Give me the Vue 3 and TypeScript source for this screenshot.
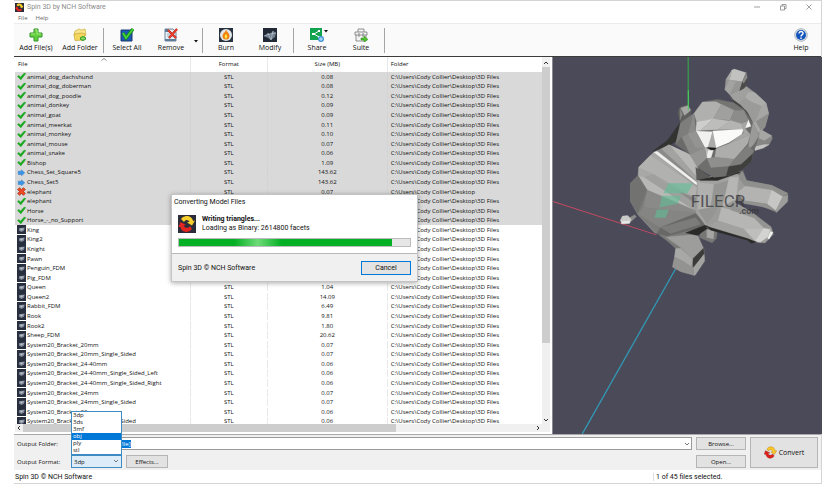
<script setup lang="ts">
import { onMounted, ref } from 'vue'

type Status = 'done' | 'next' | 'error' | 'idle'
interface Model { name: string; status: Status; size: string; format: string; folder: string }

const root = 'C:\\Users\\Cody Collier\\Desktop'
const models: Model[] = ([
  ['animal_dog_dachshund', 'done', '0.08'],
  ['animal_dog_doberman', 'done', '0.08'],
  ['animal_dog_poodle', 'done', '0.12'],
  ['animal_donkey', 'done', '0.09'],
  ['animal_goat', 'done', '0.09'],
  ['animal_meerkat', 'done', '0.11'],
  ['animal_monkey', 'done', '0.10'],
  ['animal_mouse', 'done', '0.07'],
  ['animal_snake', 'done', '0.06'],
  ['Bishop', 'done', '1.09'],
  ['Chess_Set_Square5', 'next', '143.62'],
  ['Chess_Set5', 'next', '143.62'],
  ['elephant', 'error', '0.07'],
  ['elephant', 'done', ''],
  ['Horse', 'done', ''],
  ['Horse_-_no_Support', 'done', ''],
  ['King', 'idle', ''],
  ['King2', 'idle', ''],
  ['Knight', 'idle', ''],
  ['Pawn', 'idle', ''],
  ['Penguin_FDM', 'idle', ''],
  ['Pig_FDM', 'idle', ''],
  ['Queen', 'idle', '1.04'],
  ['Queen2', 'idle', '14.09'],
  ['Rabbit_FDM', 'idle', '6.49'],
  ['Rook', 'idle', '9.81'],
  ['Rook2', 'idle', '1.80'],
  ['Sheep_FDM', 'idle', '20.62'],
  ['System20_Bracket_20mm', 'idle', '0.07'],
  ['System20_Bracket_20mm_Single_Sided', 'idle', '0.07'],
  ['System20_Bracket_24-40mm', 'idle', '0.06'],
  ['System20_Bracket_24-40mm_Single_Sided_Left', 'idle', '0.06'],
  ['System20_Bracket_24-40mm_Single_Sided_Right', 'idle', '0.06'],
  ['System20_Bracket_24mm', 'idle', '0.07'],
  ['System20_Bracket_24mm_Single_Sided', 'idle', '0.07'],
  ['System20_Bracket_32', 'idle', '0.06'],
  ['System20_Bracket_32mm_Single_Sided', 'idle', '0.06'],
] as [string, Status, string][]).map(([name, status, size]) => ({
  name, status, size, format: size ? 'STL' : '', folder: status === 'error' ? root : root + '\\3D Files',
}))

const formats = ['3dp', '3ds', '3mf', 'obj', 'ply', 'stl']
const format = ref('3dp')
const hovered = ref('obj')
const folder = ref('[Same as source file]')
const progress = 92
const folderInput = ref<HTMLInputElement | null>(null)
onMounted(() => {
  folderInput.value?.focus()
  folderInput.value?.select()
})

// Facets of the low-poly model: fill followed by its outline points.
const facets: [string, string][] = [
  // tail
  ['#8b8b89', '85,472 103,462 108,468 92,482'],
  ['#c9c9c7', '60,478 66,466 82,464 93,476 88,487 64,489'],
  ['#e9e9e7', '64,482 88,480 88,487 64,489'],
  // far legs
  ['#777775', '300,510 330,500 350,508 347,532 334,546 296,530'],
  ['#a5a5a3', '318,506 340,510 338,534 318,530'],
  ['#7a7a78', '412,335 426,330 437,360 512,374 560,398 561,422 526,455 482,436 430,426 395,418 388,375'],
  ['#8f8f8d', '424,333 437,360 512,374 560,398 545,408 512,388 432,376 412,350'],
  ['#b3b3b1', '432,376 512,388 498,430 430,420 408,395'],
  ['#9c9c9a', '412,350 432,376 408,395 392,380'],
  ['#c6c6c4', '512,388 545,408 524,450 498,430'],
  ['#9d9d9b', '545,408 560,404 558,424 526,455 524,450'],
  ['#929290', '430,420 498,430 524,450 482,438 428,428'],
  // hind leg
  ['#7a7a78', '175,522 200,540 225,563 218,610 284,626 312,592 310,565 285,518 300,500'],
  ['#9d9d9b', '196,528 290,520 308,562 276,594 240,560'],
  ['#3b3b39', '308,562 310,578 278,620 276,594'],
  ['#a8a8a6', '225,563 240,562 276,594 272,620 250,602 222,588'],
  ['#939391', '215,618 222,588 250,602 278,620 280,643 240,632'],
  ['#a3a3a1', '278,620 310,580 312,600 284,642 280,643'],
  // body
  ['#333331', '155,274 200,240 240,185 245,228 206,256'],
  ['#8a8a88', '160,275 205,253 270,283 292,322 292,352 300,420 320,496 200,527 162,516 112,462 90,422 90,368 113,345 115,320'],
  ['#a8a8a6', '160,275 115,320 113,345 132,350 280,410 290,380'],
  ['#b8b8b6', '113,345 132,350 285,450 140,388'],
  ['#a0a09e', '132,350 160,340 285,430 285,450'],
  ['#b1b1af', '115,320 150,284 288,380 286,410 160,340'],
  ['#b8b8b6', '205,253 270,283 292,322 290,352'],
  ['#a3a3a1', '183,266 205,253 290,352 288,362'],
  ['#f0f0ee', '160,275 170,272 289,366 288,374'],
  ['#727270', '113,345 90,368 90,422 112,460 128,432 140,388'],
  ['#8a8a88', '140,388 285,450 128,440'],
  ['#7c7c7a', '140,388 128,440 285,458 170,518 112,460'],
  ['#858583', '128,440 285,458 180,500 112,460'],
  ['#686866', '170,518 180,500 285,458 320,496 270,508 200,526'],
  ['#7c7c7a', '180,500 285,470 300,490 210,518'],
  ['#2a2a28', '255,516 316,492 324,500 290,524'],
  // chest
  ['#a2a2a0', '290,350 330,348 400,335 415,345 412,400 395,440 342,492 315,495 286,455'],
  ['#b0b0ae', '292,365 340,372 330,440 292,448'],
  ['#959593', '340,372 385,360 365,430 320,490 292,448 330,440'],
  ['#b6b6b4', '385,350 412,350 405,415 365,440'],
  ['#2b2b29', '288,355 330,350 400,328 418,336 350,360 300,360'],
  ['#5b5b59', '285,320 330,350 288,358'],
  // near front leg
  ['#9b9b99', '372,435 395,420 455,456 510,498 517,520 492,546 470,545 318,500 350,442'],
  ['#b6b6b4', '362,440 460,466 488,502 430,505 352,480'],
  ['#939391', '388,430 450,455 512,503 488,500 460,472 390,448'],
  ['#a1a19f', '318,498 352,480 430,505 462,538 440,535'],
  ['#bebebc', '430,505 488,502 462,540'],
  ['#d3d3d1', '488,502 508,506 500,528 478,544 462,540'],
  ['#f3f3f1', '508,512 516,514 504,535 500,532'],
  ['#2a2a28', '314,494 330,500 440,533 466,543 450,547 440,538 330,508'],
  // trunk
  ['#9a9a98', '385,102 424,90 436,78 462,98 495,128 503,160 492,200 478,217 450,212 455,185 437,150 408,130 392,115'],
  ['#a0a09e', '388,102 432,82 444,94 420,128 400,124'],
  ['#adadab', '444,94 462,98 495,128 482,138 448,124 432,112'],
  ['#9b9b99', '432,112 448,124 482,138 462,182 436,150 416,128'],
  ['#a6a6a4', '482,138 495,128 503,160 464,184'],
  ['#8d8d8b', '464,184 503,160 492,200 480,212'],
  ['#a9a9a7', '455,186 464,184 480,212 472,220 452,212'],
  ['#40403e', '386,104 396,118 420,136 440,160 452,186 442,174 424,150 402,130'],
  ['#969694', '375,58 386,60 425,64 416,90 386,102 372,88'],
  ['#a9a9a7', '375,58 393,30 386,60'],
  ['#c1c1bf', '393,30 400,27 436,38 425,64 386,60'],
  ['#a3a3a1', '386,60 404,66 386,102 372,88'],
  ['#4b4b49', '436,38 439,60 430,84 416,92 425,64'],
  ['#8a8a88', '436,38 439,52 428,70 425,64'],
  // ears
  ['#5e5e5c', '238,140 262,134 273,150 268,166 238,182 232,155'],
  ['#a6a6a4', '240,143 262,136 270,150 252,166'],
  ['#858583', '238,145 246,162 238,180'],
  ['#858583', '480,208 512,226 514,234 504,254 486,264 462,270 452,255 470,228'],
  ['#a6a6a4', '480,208 512,226 490,240 470,232'],
  ['#c4c4c2', '458,260 490,252 504,252 486,263 462,270'],
  // head
  ['#6b6b69', '305,125 350,117 398,127 430,148 455,186 474,225 458,275 450,305 420,330 385,345 340,350 300,328 268,282 225,252 240,182 278,160'],
  ['#b0b0ae', '305,125 345,124 362,132 338,175 288,184 280,160'],
  ['#757573', '345,120 398,128 428,150 400,150 362,132'],
  ['#a0a09e', '362,132 400,150 388,180 338,175'],
  ['#8c8c8a', '400,150 428,150 442,178 422,190 388,180'],
  ['#cececc', '288,184 338,175 300,210 285,212'],
  ['#bdbdbb', '338,175 388,182 350,208 300,210'],
  ['#b4b4b2', '388,180 422,190 428,206 350,208'],
  ['#f1f1ef', '285,212 335,214 325,258 312,262'],
  ['#ababa9', '336,214 322,258 345,262'],
  ['#fafaf8', '336,212 428,206 422,222 384,246 346,262'],
  ['#f4f4f2', '442,178 450,198 432,204'],
  ['#a6a6a4', '422,190 440,182 432,204 448,222 384,250 428,218'],
  ['#8b8b89', '280,160 285,212 312,262 268,282 242,226 240,190'],
  ['#7d7d7b', '240,190 278,162 262,220 240,232 225,252'],
  ['#949492', '262,220 285,212 312,262 285,262'],
  ['#adadab', '346,264 384,250 448,222 440,250 400,296 342,290'],
  ['#9a9a98', '448,222 456,186 474,225 458,252 440,270'],
  ['#b9b9b7', '312,262 328,268 318,294'],
  ['#eeeeec', '322,270 338,268 330,294 318,292'],
  ['#959593', '268,282 312,262 318,294 290,320'],
  ['#8f8f8d', '318,294 342,290 400,296 384,318 330,322'],
  ['#6e6e6c', '290,320 318,294 330,322 382,318 376,346 340,350'],
  ['#7e7e7c', '400,296 440,255 458,272 420,315 384,318'],
  ['#3f3f3d', '384,318 420,312 456,280 450,305 420,330 385,345 376,346'],
  ['#1b1b1a', '320,262 346,263 342,268 332,269'],
]
</script>

<template>
  <main class="app">
    <header class="titlebar">
      <svg class="logo" viewBox="0 0 18 18"><use href="#spin" /></svg>
      <h1>Spin 3D by NCH Software</h1>
      <div class="window-buttons">
        <button aria-label="Minimize"><svg viewBox="0 0 8 8"><path d="M1 4h6" /></svg></button>
        <button aria-label="Restore"><svg viewBox="0 0 8 8"><path d="M1.500 3h4v4h-4zM3 3V1.500h4v4H5.500" /></svg></button>
        <button aria-label="Close"><svg viewBox="0 0 8 8"><path d="M1.500 1.500l5 5M6.500 1.500l-5 5" /></svg></button>
      </div>
    </header>

    <nav class="menubar"><button>File</button><button>Help</button></nav>

    <div class="toolbar">
      <button class="tool">
        <svg viewBox="0 0 14 14"><path d="M5 1h4v4h4v4H9v4H5V9H1V5h4z" fill="#62cf3c" stroke="#36962a" /><path d="M6 2h2v4h4M2 6h4" stroke="#a5ec7d" fill="none" /></svg>
        Add File(s)
      </button>
      <button class="tool">
        <svg viewBox="0 0 14 14"><path d="M2 3l4-2 2 1 4-1 1 6-9 5-3-5z" fill="#f7e58a" stroke="#cdb042" stroke-width=".7" /><path d="M1 6l8-1 3 1-1 6-9 .5z" fill="#f3d75d" stroke="#c7a63a" stroke-width=".7" /><path d="M10 8v5M7 10.500h6" stroke="#2c9a2c" stroke-width="2.600" /><path d="M10 8.500v4M8 10.500h4" stroke="#8be05c" stroke-width="1.200" /></svg>
        Add Folder
      </button>
      <i class="sep"></i>
      <button class="tool">
        <svg viewBox="0 0 14 14"><path d="M1 2h11v11H1z" fill="#1c58b8" stroke="#16386f" /><path d="M3 5l3 5 7-9" fill="none" stroke="#167d1d" stroke-width="3.400" /><path d="M3 5l3 5 7-9" fill="none" stroke="#3fd23a" stroke-width="2" /></svg>
        Select All
      </button>
      <button class="tool">
        <svg viewBox="0 0 14 14"><path d="M1 1h8l3 3v9H1z" fill="#e6eff5" stroke="#71869a" /><path d="M1 1h3v3H1zM1 11h11v2H1z" fill="#5d7d9b" /><path d="M3 8h6M3 6h3" stroke="#9db3c5" /><path d="M4 2l8 8M13 1L5 10" stroke="#a3160c" stroke-width="2.200" /><path d="M4 2l8 8M13 1L5 10" stroke="#ee4230" stroke-width="1.500" /></svg>
        Remove
      </button>
      <button class="more" aria-label="More remove options"><svg viewBox="0 0 6 6"><path d="M1 2h4L3 4.500z" fill="#111" /></svg></button>
      <i class="sep"></i>
      <button class="tool">
        <svg viewBox="0 0 14 14"><path d="M0 0h14v14H0z" fill="#29323f" /><circle cx="7" cy="7" r="6" fill="#e2e6ea" /><path d="M7 1.500c.5 2 3.500 3.500 3.500 6.500a3.500 3.500 0 0 1-7 0c0-1.500 1-2 1.300-3.500C6 5 6.500 3 7 1.500z" fill="#f0830e" /><path d="M7 6c1.500 1.500 1.800 4 0 4.500C5 10 5.500 7.500 7 6z" fill="#ffe14a" /></svg>
        Burn
      </button>
      <button class="tool">
        <svg viewBox="0 0 14 14"><use href="#mesh" /></svg>
        Modify
      </button>
      <i class="sep"></i>
      <button class="tool share">
        <svg viewBox="0 0 14 14"><path d="M0 0h12v12H0z" fill="#12a350" /><path d="M9 3L4 6l5 3" fill="none" stroke="#fff" /><path d="M8 2h2v2H8zM2 5h3v2H2zM8 8h2v2H8z" fill="#fff" /><circle cx="11" cy="11" r="3" fill="#3c93d8" /><path d="M11 9v4M9 11h4" stroke="#c5e5fa" /></svg>
        <svg class="caret" viewBox="0 0 6 6"><path d="M1 2h4L3 4.500z" fill="#111" /></svg>
        Share
      </button>
      <button class="tool">
        <svg viewBox="0 0 14 14"><path d="M4 4V1h6v3M1 4h12v3H1zM2 7v6h10V7M5 5v4M9 5v4" fill="#f4f4f4" stroke="#777" stroke-width=".8" /><path d="M7 10h3V8l4 3.500-4 2.500v-2H7z" fill="#4fc22e" stroke="#2d8a1b" stroke-width=".5" /></svg>
        Suite
      </button>
      <i class="sep"></i>
      <button class="tool help">
        <svg viewBox="0 0 14 14"><circle cx="7" cy="7" r="6.300" fill="#dfe3e8" stroke="#9aa4b0" stroke-width=".8" /><circle cx="7" cy="7" r="5" fill="#1355bb" /><path d="M5 5.500C5 2.800 9.200 3 9 5.400 9 7 7 6.800 7 8.500M7 9.500V11" fill="none" stroke="#fff" stroke-width="1.400" /></svg>
        Help
      </button>
    </div>

    <div class="content">
      <section class="files">
        <div class="list">
          <table>
            <thead>
              <tr><th>File</th><th>Format</th><th>Size (MB)</th><th>Folder</th></tr>
            </thead>
            <tbody>
              <tr v-for="(m, i) in models" :key="i" :class="{ selected: m.status !== 'idle' }">
                <td><svg class="status" viewBox="0 0 14 14"><use :href="'#' + m.status" /></svg>{{ m.name }}</td>
                <td>{{ m.format }}</td>
                <td>{{ m.size }}</td>
                <td>{{ m.folder }}</td>
              </tr>
            </tbody>
          </table>
          <svg class="sort" viewBox="0 0 6 3"><path d="M.5 2.500L3 .5l2.500 2" fill="none" stroke="#777" stroke-width=".8" /></svg>
        </div>
        <div class="vscroll">
          <svg viewBox="0 0 8 8"><path d="M2 5l2-2 2 2" /></svg>
          <div class="track"><div class="thumb"></div></div>
          <svg viewBox="0 0 8 8"><path d="M2 3l2 2 2-2" /></svg>
        </div>
        <div class="hscroll">
          <svg viewBox="0 0 8 8"><path d="M5 2L3 4l2 2" /></svg>
          <div class="track"><div class="thumb"></div></div>
          <svg viewBox="0 0 8 8"><path d="M3 2l2 2-2 2" /></svg>
        </div>

        <div class="dialog" role="dialog" aria-labelledby="dialog-title">
          <h2 id="dialog-title">Converting Model Files</h2>
          <div class="job">
            <svg viewBox="0 0 18 18"><use href="#spin" /></svg>
            <p><strong>Writing triangles...</strong><br />Loading as Binary: 2614800 facets</p>
          </div>
          <div class="bar"><div class="fill" :style="{ width: progress + '%' }"></div></div>
          <footer><span>Spin 3D © NCH Software</span><button>Cancel</button></footer>
        </div>
      </section>

      <section class="viewer">
        <svg viewBox="553 57 268 376" preserveAspectRatio="xMinYMin slice">
          <path d="M687.500 57V110" stroke="#35b04a" />
          <path d="M550 199.800L656 234" stroke="#c94a60" />
          <path d="M676 266L581 434" stroke="#3199b5" stroke-width="1.300" />
          <g transform="translate(600 60) scale(.3333)">
            <polygon v-for="([fill, points], i) in facets" :key="i" :fill="fill" :stroke="fill" stroke-width=".8" :points="points" />
            <path d="M263 90V150" stroke="#4fce5f" stroke-width="3" />
            <g fill="#5fbf95" opacity=".6">
              <path d="M203 368h74l-16 30h-72z" />
              <path d="M184 405h58l-11 24-54 11z" />
              <path d="M169 446h36l-10 25h-33z" />
            </g>
          </g>
          <g class="mark"><text x="690" y="206" class="mark-name">FILECR</text><text x="738" y="213" class="mark-domain">.com</text></g>
        </svg>
      </section>
    </div>

    <form class="output" @submit.prevent>
      <div class="fields">
        <div class="field">
          <label for="folder">Output Folder:</label>
          <div class="combo">
            <input id="folder" ref="folderInput" v-model="folder" type="text" />
            <svg viewBox="0 0 8 8"><path d="M2 3l2 2 2-2" /></svg>
          </div>
          <button class="btn small">Browse...</button>
        </div>
        <div class="field">
          <label for="format">Output Format:</label>
          <div class="format">
            <select id="format" v-model="format">
              <option v-for="f in formats" :key="f">{{ f }}</option>
            </select>
            <svg viewBox="0 0 8 8"><path d="M2 3l2 2 2-2" /></svg>
            <ul role="listbox" aria-label="Output Format">
              <li v-for="f in formats" :key="f" role="option" :class="{ active: f === hovered }" @mouseenter="hovered = f" @click="format = f">{{ f }}</li>
            </ul>
          </div>
          <button class="btn effects">Effects...</button>
          <button class="btn small open">Open...</button>
        </div>
      </div>
      <button class="btn convert"><svg viewBox="0 0 18 18"><use href="#arrows" /></svg>Convert</button>
    </form>

    <footer class="statusbar"><span>Spin 3D © NCH Software</span><span class="count">1 of 45 files selected.</span></footer>

    <svg class="defs" aria-hidden="true">
      <symbol id="arrows" viewBox="0 0 18 18">
        <path d="M4 4c4-5 11-3 11.500 3l2-.5-3 5-5-3 2.500-.7C11 5 8 4 6 7z" fill="#f9c928" stroke="#b77d12" stroke-width=".6" />
        <path d="M14 14c-4 5-11 3-11.500-3l-2 .5 1.500-5 6 3-2.500.7C6.500 13 10 14 12 11z" fill="#e0221c" stroke="#8f100d" stroke-width=".6" />
      </symbol>
      <symbol id="spin" viewBox="0 0 18 18">
        <path d="M0 0h18v18H0z" fill="#2c2d3a" />
        <path d="M3 4c4-5 11-3 12 2l2-.5-3 5-5-3 2.500-.7C10 5 8 4 6 7z" fill="#f9d02c" />
        <path d="M14 14c-4 5-11 3-11.500-2L.5 12l2-5 5.500 3-2.500.7C7 13 10 14 12 11z" fill="#e3261f" />
      </symbol>
      <symbol id="mesh" viewBox="0 0 14 14">
        <path d="M0 0h14v14H0z" fill="#222936" />
        <path d="M1 8l4-3 2 1 3-3 3 2-1 4-4 3-3-2z" fill="#717e90" />
        <path d="M1 8l6-2 6-1M5 5l3 7M10 3L8 12" stroke="#c5ccd6" stroke-width=".6" fill="none" />
      </symbol>
      <symbol id="idle" viewBox="0 0 14 14">
        <path d="M0 0h14v14H0z" fill="#272e3d" />
        <path d="M3 5l9-1-1 5-4 2-4-2z" fill="#7b8494" />
        <path d="M4 6l7-1-4 4z" fill="#b9bfc9" />
      </symbol>
      <symbol id="done" viewBox="0 0 14 14"><path d="M1 7l2-1.500 2.500 2.500L11 2l2.500.5L6 12z" fill="#17a81c" stroke="#17a81c" /></symbol>
      <symbol id="next" viewBox="0 0 14 14"><path d="M2 5h5V3l5 4.500L7 12v-2H2z" fill="#3b93e6" stroke="#3f85c9" /></symbol>
      <symbol id="error" viewBox="0 0 14 14"><path d="M4 1l3 3 3-3 3 3-3 3 3 3-3 3-3-3-3 3-3-3 3-3-3-3z" fill="#ee4a24" stroke="#98200c" /></symbol>
    </svg>
  </main>
</template>

<style>
body {
  margin: 0;
  background: #fff;
}
</style>

<style scoped>
.app {
  box-sizing: border-box;
  display: flex;
  flex-direction: column;
  height: 100vh;
  margin: 0 14px;
  border: solid #d4d4d4;
  border-width: 1px 1px 1px 0;
  font: 6px/8px "Open Sans", "Noto Sans", sans-serif;
  color: #111;
}
.app * {
  box-sizing: border-box;
}
button,
input,
select {
  margin: 0;
  padding: 0;
  border: 0;
  border-radius: 0;
  background: none;
  font: inherit;
  color: inherit;
}
h1,
h2,
p,
ul {
  margin: 0;
  padding: 0;
  font-size: inherit;
  font-weight: normal;
  list-style: none;
}
svg {
  display: block;
  flex: none;
}
.defs {
  position: absolute;
  width: 0;
  height: 0;
}
.titlebar,
.dialog,
.statusbar {
  font-family: Roboto, "Liberation Sans", sans-serif;
  font-size: 7px;
}
.titlebar {
  display: flex;
  align-items: center;
  height: 12px;
  padding-left: 1px;
  gap: 3px;
  color: #8c8c8c;
}
.logo {
  width: 9px;
  height: 9px;
}
.window-buttons {
  display: flex;
  gap: 18px;
  margin-left: auto;
  padding-right: 8px;
}
.window-buttons svg {
  width: 8px;
  height: 8px;
  fill: none;
  stroke: #777;
  stroke-width: .7;
}
.menubar {
  display: flex;
  gap: 8px;
  height: 10px;
  padding-left: 4px;
  color: #666;
}
.toolbar {
  display: flex;
  height: 34px;
  padding: 4px 0 3px;
  border-top: 1px solid #ececec;
  border-bottom: 1px solid #3c3c3c;
  background: #fafafa;
}
.tool {
  position: relative;
  display: flex;
  flex-direction: column;
  align-items: center;
  gap: 2px;
  width: 44px;
  font-size: 7px;
  line-height: 8px;
}
.tool svg {
  width: 14px;
  height: 14px;
}
.tool .caret {
  position: absolute;
  top: 0;
  left: 28px;
  width: 6px;
  height: 6px;
}
.more {
  display: flex;
  align-items: center;
  width: 8px;
}
.more svg {
  width: 6px;
  height: 6px;
}
.sep {
  width: 1px;
  margin: 0 1px;
  background: #a5a5a5;
}
.help {
  width: 40px;
  margin-left: auto;
}
.content {
  display: grid;
  grid-template-columns: 2fr 1fr;
  flex: 1;
  min-height: 0;
  margin-right: -1px;
}
.files {
  position: relative;
  display: grid;
  grid-template-columns: 1fr 8px;
  grid-template-rows: 1fr 8px;
  min-height: 0;
  padding: 0 2px 2px 1px;
  border-right: 1px solid #8a8a92;
}
.list {
  position: relative;
  min-height: 0;
  overflow: hidden;
}
table,
thead,
tbody {
  display: grid;
}
thead {
  height: 15px;
}
tbody {
  grid-template-rows: repeat(37, minmax(0, 1fr));
  height: 354px;
}
tr {
  display: grid;
  grid-template-columns: 176fr 77fr 120fr 154fr;
  align-items: center;
}
th,
td {
  overflow: hidden;
  padding: 0 3px;
  border-right: 1px solid #e9e9e9;
  font-weight: normal;
  text-align: left;
  white-space: nowrap;
}
th {
  line-height: 15px;
}
td:first-child {
  display: flex;
  align-items: center;
  gap: 1px;
  padding-left: 2px;
}
th:nth-child(2),
th:nth-child(3),
td:nth-child(2),
td:nth-child(3) {
  text-align: center;
}
th:last-child,
td:last-child {
  border: 0;
}
.selected {
  background: #d9d9d9;
}
.selected td {
  border-color: #d3d3d3;
}
.status {
  width: 9px;
  height: 9px;
}
.sort {
  position: absolute;
  top: 1px;
  left: 86px;
  width: 6px;
  height: 3px;
}
.vscroll,
.hscroll {
  display: flex;
  background: #f0f0f0;
}
.vscroll {
  flex-direction: column;
  padding-top: 2px;
}
.hscroll {
  grid-column: 1 / -1;
  padding-right: 8px;
}
.vscroll svg,
.hscroll svg,
.combo svg,
.format svg {
  width: 8px;
  height: 8px;
  fill: none;
  stroke: #333;
}
.combo svg,
.format svg {
  stroke: #777;
}
.track {
  flex: 1;
}
.thumb {
  background: #cdcdcd;
}
.vscroll .thumb {
  height: 79%;
}
.hscroll .thumb {
  width: 73%;
  height: 100%;
}
.dialog {
  position: absolute;
  top: 137px;
  left: 157px;
  width: 247px;
  background: #fff;
  border: 1px solid #c4c4c4;
  box-shadow: 0 1px 5px rgba(0, 0, 0, .35);
}
.dialog h2 {
  padding: 3px 2px 0;
  line-height: 8px;
}
.job {
  display: flex;
  align-items: center;
  gap: 6px;
  padding: 9px 6px 5px;
}
.job svg {
  width: 18px;
  height: 18px;
}
.job p {
  line-height: 9px;
}
.bar {
  height: 9px;
  margin: 0 6px 6px;
  border: 1px solid #bcbcbc;
  background: #e6e6e6;
}
.fill {
  height: 100%;
  background: linear-gradient(90deg, #06b025 26%, #6edb78 37%, #06b025 48%);
}
.dialog footer {
  display: flex;
  align-items: center;
  justify-content: space-between;
  height: 28px;
  padding: 0 6px;
  border-top: 1px solid #b9b9b9;
  background: #f0f0f0;
}
.dialog footer button {
  width: 50px;
  height: 14px;
  border: 1px solid #0078d7;
  background: #e3e3e3;
}
.viewer {
  overflow: hidden;
  background: #4b4a59;
}
.viewer svg {
  width: 100%;
  height: 100%;
}
.mark {
  fill: #37373a;
  opacity: .75;
  font-family: Roboto, sans-serif;
}
.mark-name {
  font-size: 17px;
}
.mark-domain {
  font-size: 9px;
  font-weight: bold;
}
.output {
  display: flex;
  gap: 4px;
  padding: 2px 3px;
  border-top: 1px solid #a8a8a8;
  background: #f0f0f0;
}
.fields {
  display: grid;
  flex: 1;
  gap: 5px;
}
.field {
  display: flex;
  align-items: center;
  gap: 4px;
  height: 13px;
}
.field label {
  width: 50px;
}
.combo {
  position: relative;
  display: flex;
  flex: 1;
  align-items: center;
  height: 13px;
  border: 1px solid #9a9a9a;
  background: #fff;
}
.combo input {
  flex: 1;
  padding-left: 1px;
  outline: 0;
}
.combo input::selection {
  background: #0078d7;
  color: #fff;
}
.btn {
  border: 1px solid #b5b5b5;
  background: #e2e2e2;
}
.small {
  width: 50px;
  height: 13px;
}
.format {
  position: relative;
  width: 51px;
  height: 13px;
}
.format select {
  width: 100%;
  height: 100%;
  padding-left: 2px;
  border: 1px solid #3f8cc4;
  background: #dcecf8;
  appearance: none;
}
.format svg {
  position: absolute;
  top: 2px;
  right: 2px;
  pointer-events: none;
}
.format ul {
  position: absolute;
  bottom: 100%;
  left: 0;
  width: 100%;
  border: 1px solid #3f8cc4;
  background: #fff;
}
.format li {
  height: 7px;
  padding-left: 1px;
  line-height: 7px;
}
.format .active {
  background: #0078d7;
  color: #fff;
}
.effects {
  width: 42px;
  height: 13px;
}
.open {
  margin-left: auto;
}
.convert {
  display: flex;
  align-items: center;
  justify-content: center;
  gap: 2px;
  width: 68px;
  font-size: 7px;
}
.convert svg {
  width: 13px;
  height: 13px;
}
.statusbar {
  display: flex;
  align-items: center;
  height: 13px;
  padding-left: 1px;
}
.count {
  width: 168px;
  margin-left: auto;
  padding-left: 2px;
  border-left: 1px solid #ddd;
}
</style>
